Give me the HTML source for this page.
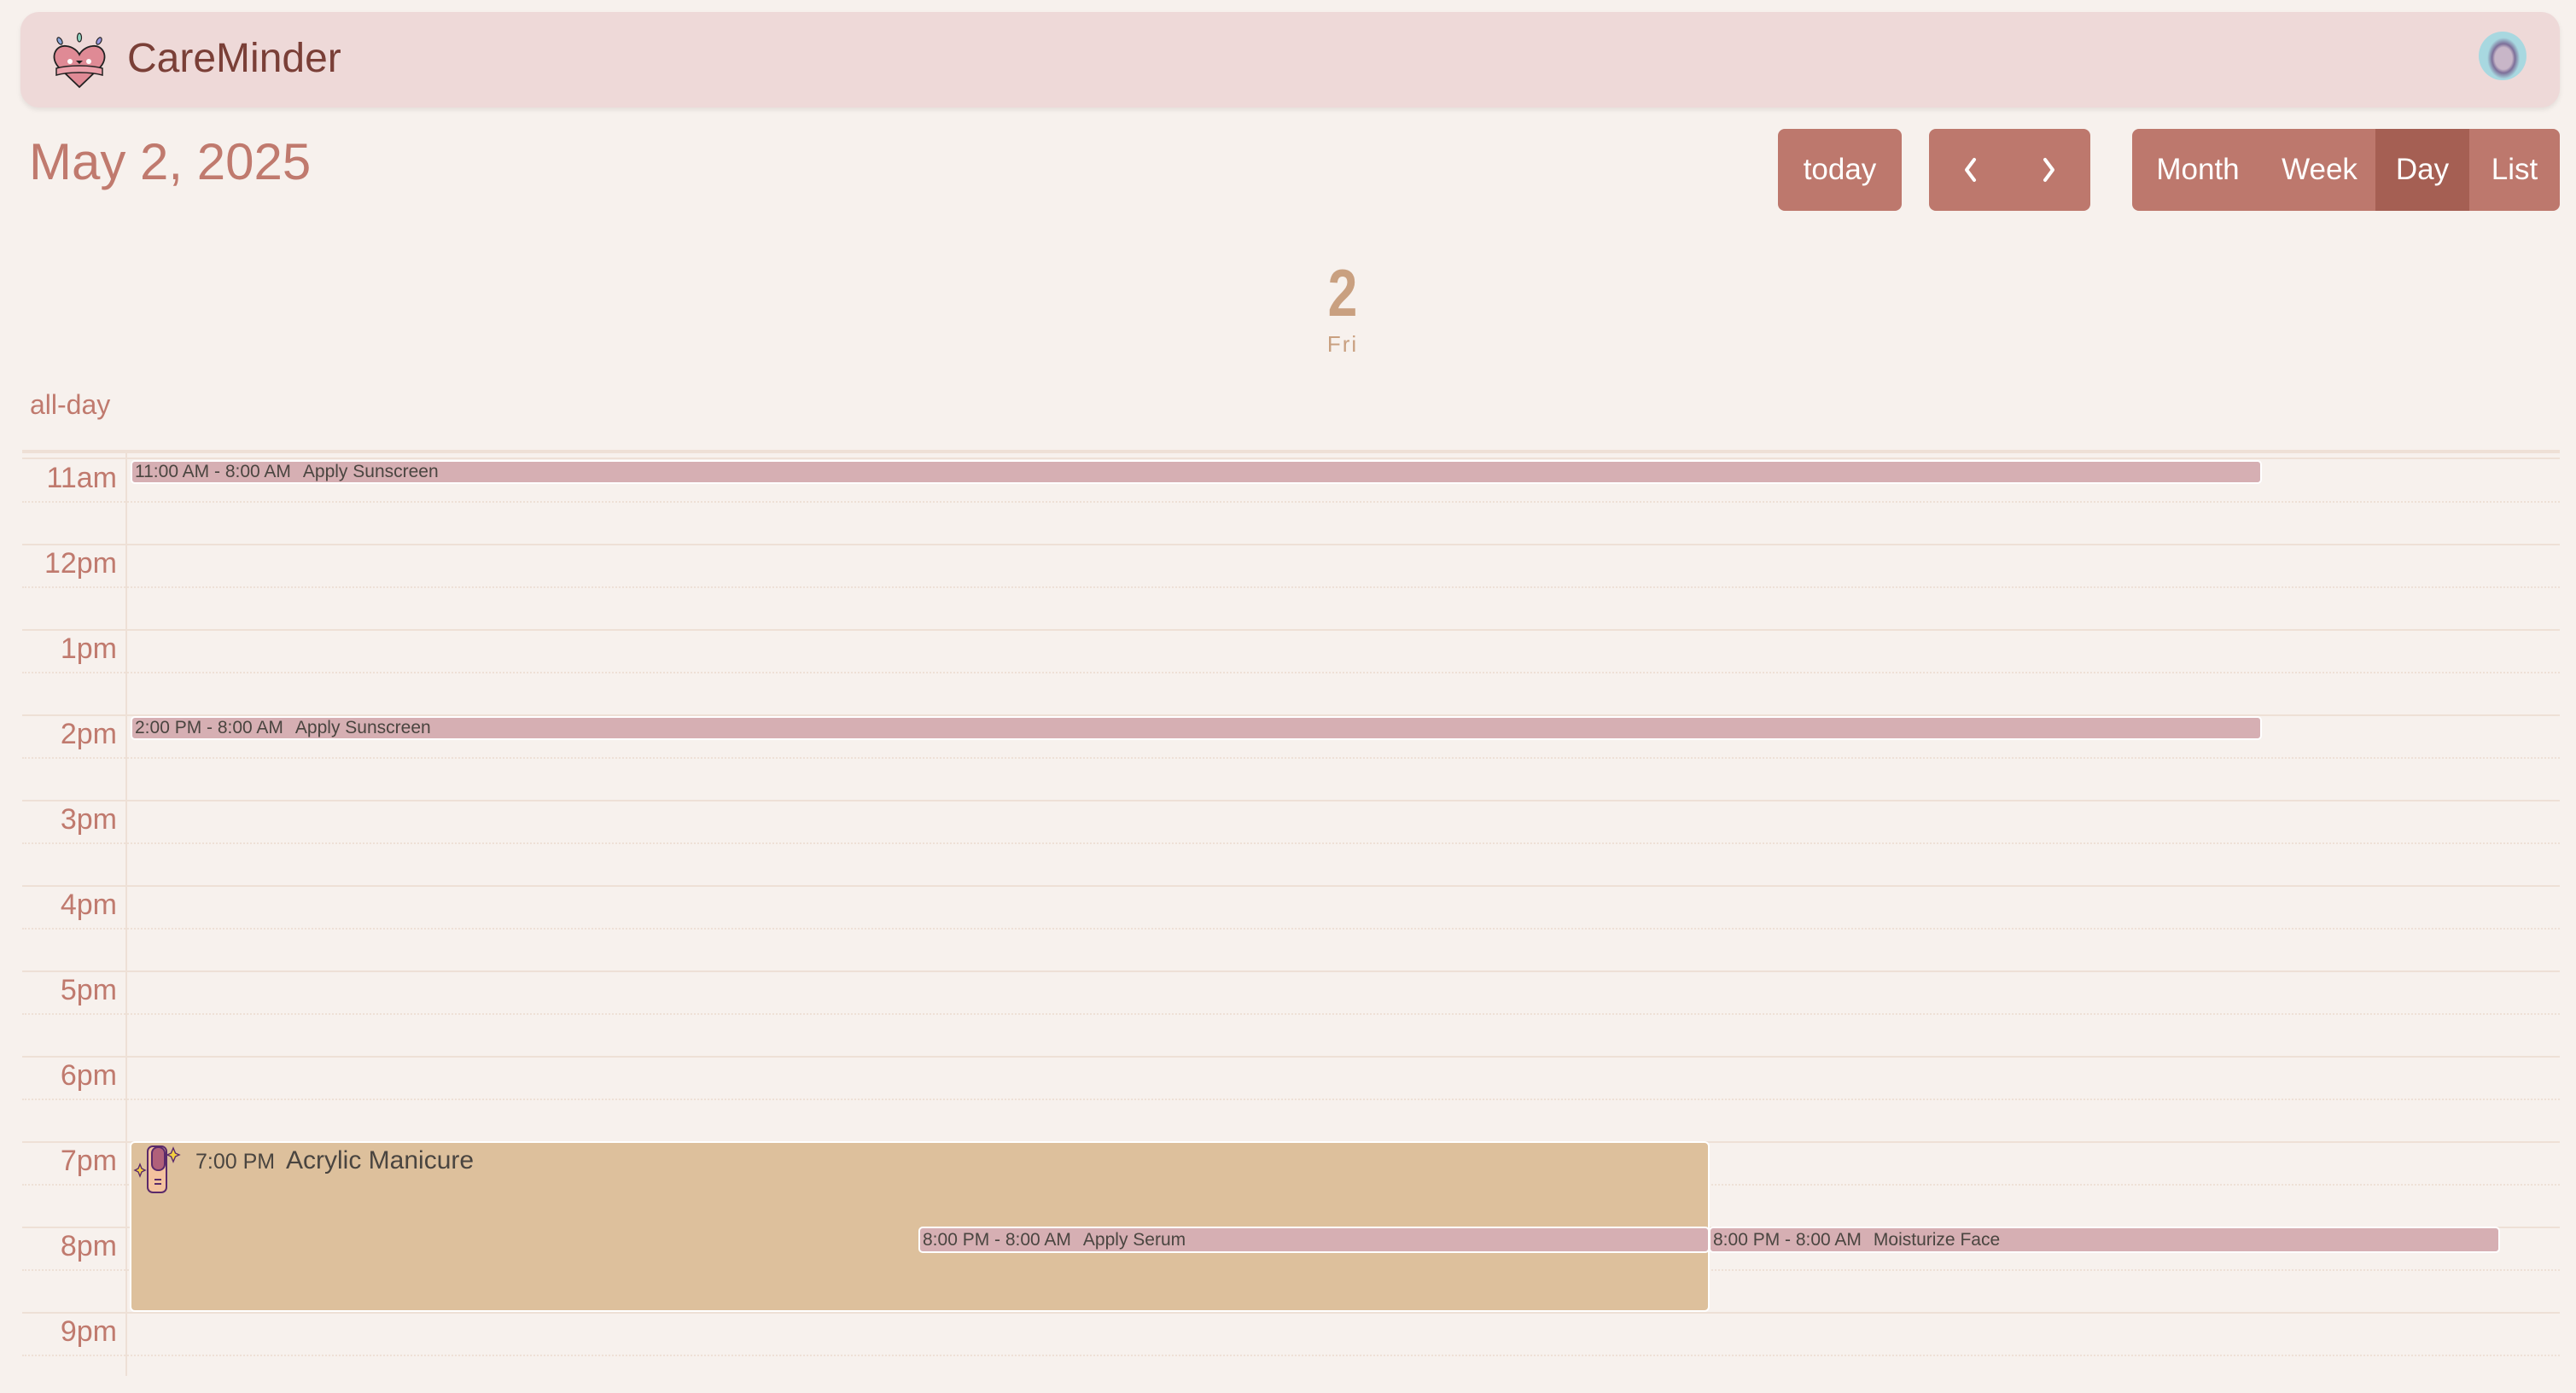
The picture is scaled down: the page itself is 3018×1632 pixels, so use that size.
<!DOCTYPE html>
<html><head><meta charset="utf-8"><style>
*{margin:0;padding:0;box-sizing:border-box}
body{width:3018px;height:1632px;background:#f7f1ed;font-family:"Liberation Sans",sans-serif;position:relative;overflow:hidden}
.abs{position:absolute}
.hdr{left:24px;top:14px;width:2975px;height:112px;background:#eed9d8;border-radius:22px;box-shadow:0 3px 6px rgba(0,0,0,.08)}
.btn{background:#bd786d;border-radius:8px;color:#fff;font-size:35px;display:flex;align-items:center;justify-content:center}
.lab{color:#c07a6e;font-size:34px;right:2881px;text-align:right;width:120px}
.hl{left:26px;width:2973px;height:2px;background:#eee0d6}
.dl{left:26px;width:2973px;border-top:2px dotted #eee0d6;height:0}
.ev{background:#d6afb3;border:2px solid #fff;border-radius:5px;color:#4a4540;font-size:21px;line-height:23px;padding-left:3px;white-space:nowrap;overflow:hidden}
.ev b{font-weight:normal;margin-left:14px}
</style></head><body>
<div class="abs hdr"></div>
<svg class="abs" style="left:60px;top:38px" width="66" height="66" viewBox="0 0 66 66">
<ellipse cx="10" cy="10" rx="2.5" ry="4.5" fill="#8aa4d8" stroke="#222" stroke-width="1.2" transform="rotate(-30 10 10)"/>
<ellipse cx="33" cy="6" rx="2.5" ry="5" fill="#8fd4c0" stroke="#222" stroke-width="1.2"/>
<ellipse cx="56" cy="10" rx="2.5" ry="4.5" fill="#9a98e0" stroke="#222" stroke-width="1.2" transform="rotate(30 56 10)"/>
<path d="M33 64 L8 40 C-2 28 6 14 18 16 C26 17 31 22 33 26 C35 22 40 17 48 16 C60 14 68 28 58 40 Z" fill="#df8a95" stroke="#222" stroke-width="1.8"/>
<path d="M6 42 C20 38 46 38 60 42 L60 50 C46 46 20 46 6 50Z" fill="#eaa0aa" stroke="#222" stroke-width="1.5"/>
<circle cx="22" cy="34" r="3" fill="#fff"/><circle cx="44" cy="34" r="3" fill="#fff"/>
<path d="M29 33 h8 l-4 4z" fill="#222"/>
</svg>
<div class="abs" style="left:149px;top:36px;font-size:48px;color:#7a3f37;line-height:66px">CareMinder</div>
<div class="abs" style="left:2904px;top:37px;width:56px;height:57px;border-radius:50%;background:radial-gradient(ellipse 40% 50% at 52% 55%,#c8b6c8 0 45%,#7d6f99 60%,#a8d8e0 85%)"></div>
<div class="abs" style="left:34px;top:150px;font-size:60px;color:#c07a6e;line-height:80px">May 2, 2025</div>
<div class="abs btn" style="left:2083px;top:151px;width:145px;height:96px">today</div>
<div class="abs btn" style="left:2260px;top:151px;width:189px;height:96px">
<svg width="189" height="96" viewBox="0 0 189 96"><path d="M53 36 L44 48 L53 60 M136 36 L145 48 L136 60" fill="none" stroke="#fff" stroke-width="4" stroke-linecap="round" stroke-linejoin="round"/></svg></div>
<div class="abs btn" style="left:2498px;top:151px;width:501px;height:96px;justify-content:flex-start;overflow:hidden">
<span style="width:154px;text-align:center">Month</span><span style="width:131px;text-align:center">Week</span><span style="width:110px;height:96px;line-height:96px;text-align:center;background:#a55f53">Day</span><span style="width:106px;text-align:center">List</span></div>
<div class="abs" style="left:1523px;top:298px;width:100px;text-align:center;font-size:78px;font-weight:bold;color:#c9a080;transform:scaleX(.8);line-height:90px">2</div>
<div class="abs" style="left:1523px;top:388px;width:100px;text-align:center;font-size:26px;color:#c9a080;letter-spacing:2px">Fri</div>
<div class="abs" style="left:35px;top:456px;font-size:32px;color:#c07a6e">all-day</div>
<div class="abs hl" style="top:527px;height:4px"></div>
<div class="abs hl" style="top:536px"></div>
<div class="abs" style="left:147px;top:527px;width:2px;height:1085px;background:#eee0d6"></div>
<div id="g"></div>
<div class="abs ev" style="left:153px;top:539px;width:2497px;height:28px">11:00 AM - 8:00 AM<b>Apply Sunscreen</b></div>
<div class="abs ev" style="left:153px;top:839px;width:2497px;height:28px">2:00 PM - 8:00 AM<b>Apply Sunscreen</b></div>
<div class="abs" style="left:152px;top:1337px;width:1851px;height:200px;background:#ddc09c;border:2px solid #fff;border-radius:6px"></div>
<svg class="abs" style="left:150px;top:1335px" width="70" height="70" viewBox="0 0 70 70">
<rect x="23" y="8" width="22" height="54" rx="6" fill="#f4c29e" stroke="#5a2a6a" stroke-width="2"/>
<rect x="28" y="9" width="15" height="27" rx="7" fill="#b0607a" stroke="#5a2a6a" stroke-width="2"/>
<path d="M31 47h8M31 52h8" stroke="#5a2a6a" stroke-width="2"/>
<path d="M53 10l2.5 6 4.5 2-4.5 2-2.5 6-2.5-6-4.5-2 4.5-2z" fill="#f3d040" stroke="#5a2a6a" stroke-width="1.4"/>
<path d="M14 29l2 5 4 2-4 2-2 5-2-5-4-2 4-2z" fill="#f3d040" stroke="#5a2a6a" stroke-width="1.4"/>
</svg>
<div class="abs" style="left:229px;top:1347px;font-size:25px;color:#4a4540">7:00 PM</div>
<div class="abs" style="left:335px;top:1343px;font-size:30px;color:#4a4540">Acrylic Manicure</div>
<div class="abs ev" style="left:1076px;top:1437px;width:927px;height:31px;line-height:27px">8:00 PM - 8:00 AM<b>Apply Serum</b></div>
<div class="abs ev" style="left:2002px;top:1437px;width:927px;height:31px;line-height:27px">8:00 PM - 8:00 AM<b>Moisturize Face</b></div>
<script>
var labs=["11am","12pm","1pm","2pm","3pm","4pm","5pm","6pm","7pm","8pm","9pm"],h="";
for(var i=0;i<labs.length;i++){var t=537+i*100;
if(i>0)h+='<div class="abs hl" style="top:'+t+'px"></div>';
h+='<div class="abs dl" style="top:'+(t+50)+'px"></div>';
h+='<div class="abs lab" style="left:17px;top:'+(t+4)+'px">'+labs[i]+'</div>';}
document.getElementById("g").outerHTML=h;
</script>
</body></html>
